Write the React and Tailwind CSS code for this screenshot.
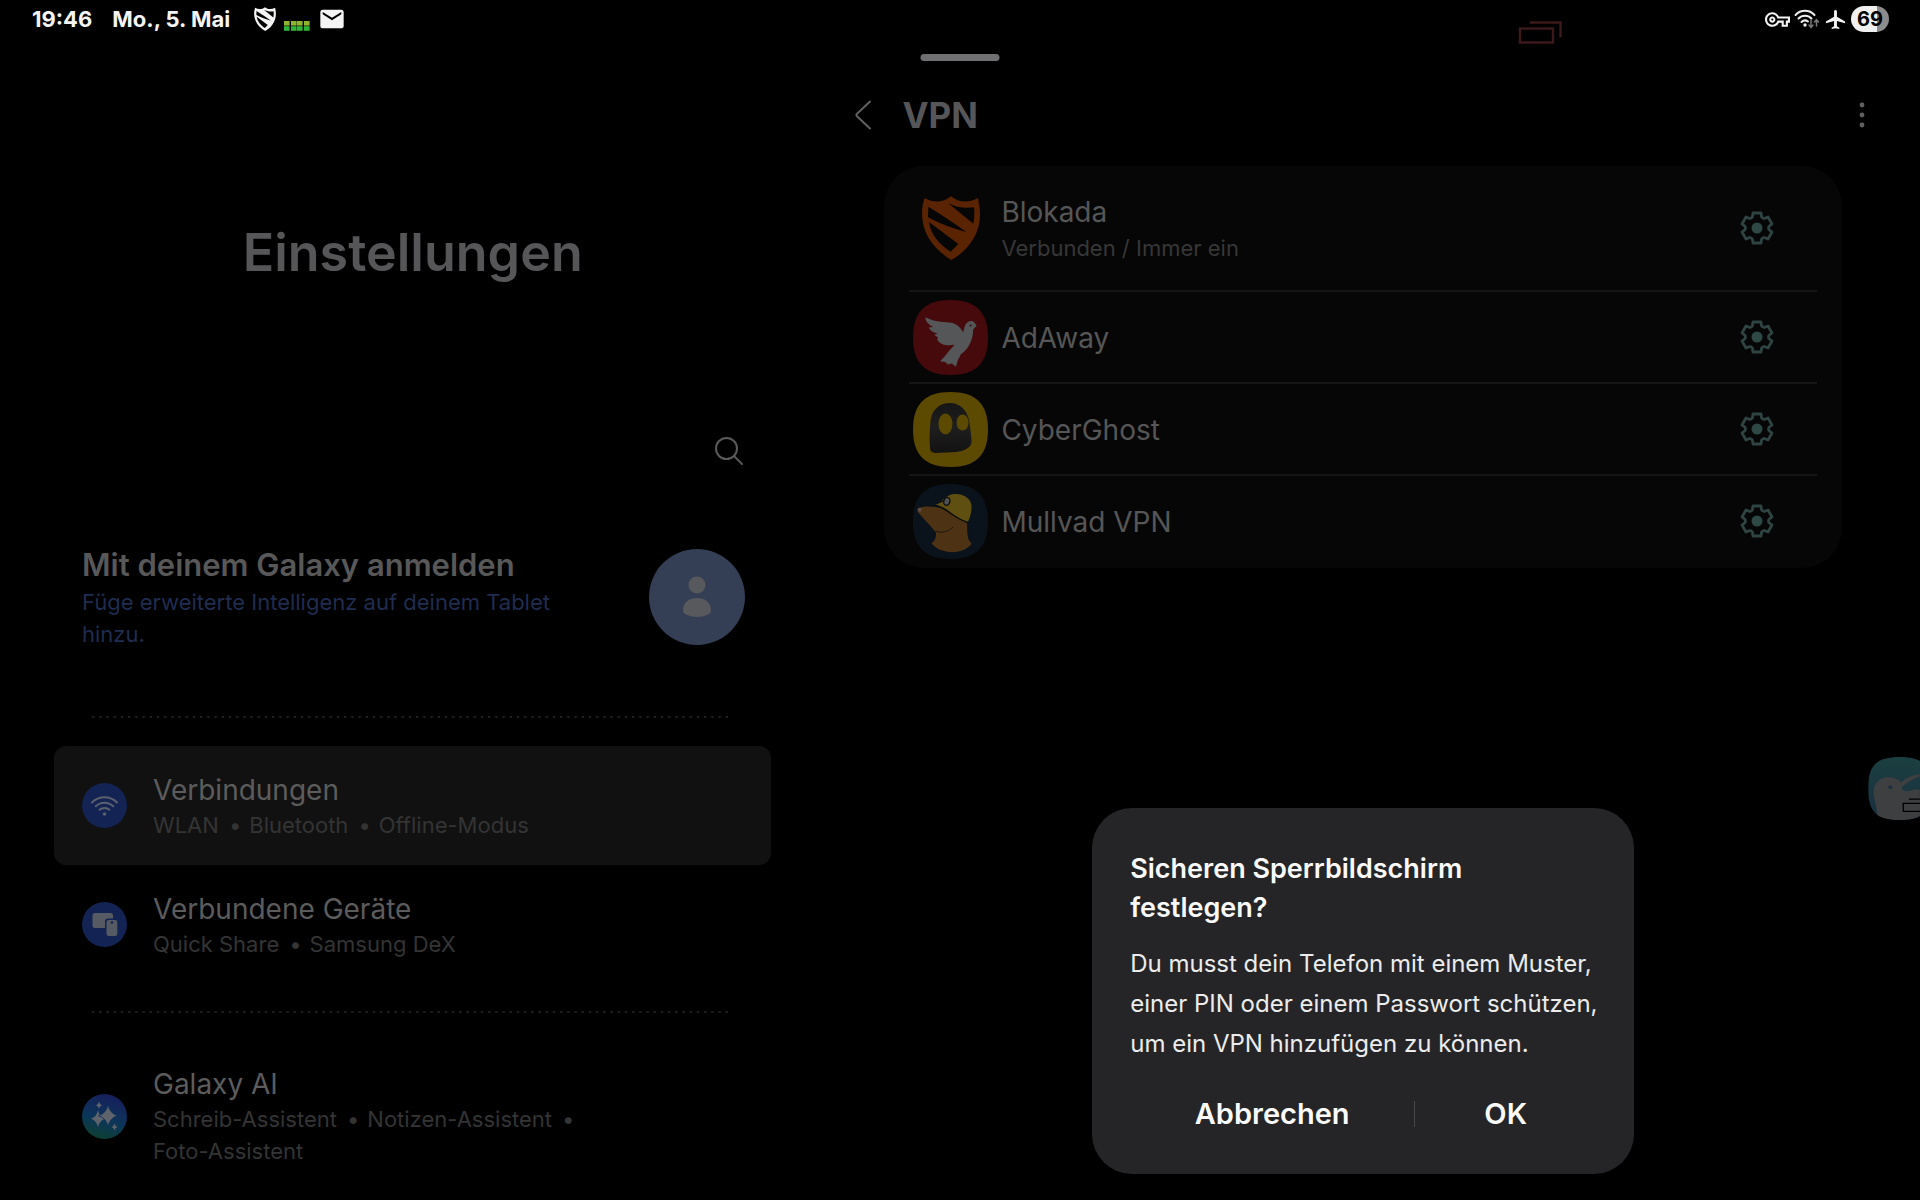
import React from 'react';
import { MdMail, MdOutlineVpnKey, MdAirplanemodeActive } from 'react-icons/md';

const SQUIRCLE = 'M0 37.5C0 12 12 0 37.5 0S75 12 75 37.5 63 75 37.5 75 0 63 0 37.5Z';

const star = (x, y, rx, ry) =>
    `M${x} ${y - ry}Q${x + rx * 0.2} ${y - ry * 0.2} ${x + rx} ${y}Q${x + rx * 0.2} ${y + ry * 0.2} ${x} ${y + ry}Q${x - rx * 0.2} ${y + ry * 0.2} ${x - rx} ${y}Q${x - rx * 0.2} ${y - ry * 0.2} ${x} ${y - ry}Z`;

// six teeth, each one is the same outline turned by 60 degrees
const gearPoints = [0, 60, 120, 180, 240, 300]
    .flatMap((deg) => {
        const a = (deg * Math.PI) / 180;
        return [[-4.6, -11], [-4, -15], [4, -15], [4.6, -11], [5.8, -10]].map(
            ([x, y]) => `${(x * Math.cos(a) - y * Math.sin(a)).toFixed(2)},${(x * Math.sin(a) + y * Math.cos(a)).toFixed(2)}`
        );
    })
    .join(' ');

function GearIcon() {
    return (
        <svg viewBox="-17 -17 34 34" className="size-[34px]" aria-hidden="true">
            <polygon points={gearPoints} fill="none" stroke="#2f4442" strokeWidth="2.8" strokeLinejoin="round" />
            <circle r="5.5" fill="#2e4845" />
        </svg>
    );
}

function ShieldIcon({ className }) {
    return (
        <svg viewBox="306 468 174 192" className={className} fill="currentColor" aria-hidden="true">
            <path
                fillRule="evenodd"
                d="M314 474C340 490 370 488 393 469C415 488 445 490 474 474C478 495 480 510 480 525C480 585 440 635 394 660C345 630 306 585 306 520C306 500 310 485 314 474ZM384 489L460 551C463 535 464 518 462 502C435 506 408 502 384 489ZM325 500L324 532C362 552 400 566 440 577C400 548 362 522 325 500ZM327 546C332 585 360 615 392 635L415 612Z"
            />
        </svg>
    );
}

function LevelIcon() {
    return (
        <svg viewBox="0 0 26 10" className="h-[10px] w-[26px]" aria-hidden="true">
            {[0, 7, 13, 20].map((x) => (
                <g key={x}>
                    <rect x={x} width="5.6" height="4.6" fill="#8db52f" />
                    <rect x={x} y="5.2" width="5.6" height="4.6" fill="#2eb437" />
                </g>
            ))}
        </svg>
    );
}

function StatusWifiIcon() {
    return (
        <svg viewBox="0 0 26 20" className="h-5 w-[26px]" fill="none" strokeWidth="2" strokeLinecap="round" aria-hidden="true">
            <path d="M1.5 6A13 13 0 0 1 20.5 6M4.5 9.5A9 9 0 0 1 17.5 9.5M7.5 13A5 5 0 0 1 14 12.5" stroke="#eee" />
            <circle cx="11" cy="16" r="1.7" fill="#eee" />
            <path d="M17 11V18M15 16L17 18.5L19 16M22.5 17V11M20.5 13L22.5 10.7L24.5 13" stroke="#777" strokeWidth="1.5" />
        </svg>
    );
}

function DoveIcon() {
    return (
        <svg viewBox="0 0 75 75" className="size-[75px]" aria-hidden="true">
            <path d={SQUIRCLE} fill="#460a0c" />
            <g transform="scale(.3348) translate(-68 -56)">
                <path
                    fill="#545657"
                    d="M104 108C112 110 120 114 132 118C150 121 165 122 182 124C200 128 210 138 218 153C221 140 224 121 240 119C250 118 253 126 258 133L248 143C247 175 236 200 211 218L202 236L196 255L184 246L172 249L164 241L149 239C162 227 172 212 192 190C172 193 150 192 140 174L143 168L131 160L142 156C125 152 118 145 115 138L128 137C115 130 106 120 104 108Z"
                />
                <circle cx="240" cy="132" r="3" fill="#2a1010" />
            </g>
        </svg>
    );
}

function GhostIcon() {
    return (
        <svg viewBox="0 0 75 75" className="size-[75px]" aria-hidden="true">
            <defs>
                <linearGradient id="ghost" x1="0" y1="0" x2="0" y2="1">
                    <stop offset="0" stopColor="#161616" />
                    <stop offset="0.5" stopColor="#1e1e1e" />
                    <stop offset="1" stopColor="#121212" />
                </linearGradient>
            </defs>
            <path d={SQUIRCLE} fill="#5c4a00" />
            <g transform="scale(.3348) translate(-68 -333)">
                <path fill="url(#ghost)" d="M119 502C116 470 118 440 121 415C127 383 150 366 178 366C210 366 231 390 236 420C240 445 242 465 243 480C243 503 213 512 185 513L134 515Q120 515 119 502Z" />
                <ellipse cx="165" cy="428" rx="21" ry="31" fill="#5c4a00" />
                <ellipse cx="216" cy="424" rx="18" ry="24" fill="#5c4a00" />
            </g>
        </svg>
    );
}

function MoleIcon() {
    return (
        <svg viewBox="0 0 75 75" className="size-[75px]" aria-hidden="true">
            <path d={SQUIRCLE} fill="#0a121b" />
            <g transform="scale(.3348) translate(-68 -609)">
                <path fill="#4d3314" d="M82 684C95 674 115 676 135 678C165 682 200 700 230 727C229 745 230 762 234 775L243 788C215 822 150 820 123 786C133 780 139 768 136 753C122 735 100 715 82 692Z" />
                <path d="M136 750C155 757 176 750 188 737" fill="none" stroke="#0a0a0a" strokeWidth="2" />
                <path fill="#5f5012" d="M133 671C150 670 152 655 175 643C200 632 240 642 243 675C243 695 238 710 232 722C210 718 195 702 170 686C155 677 145 674 133 671Z" />
                <path d="M133 673C160 674 180 705 231 724" fill="none" stroke="#0a0a0a" strokeWidth="3.5" />
                <ellipse cx="169" cy="661" rx="9" ry="12" fill="#505356" stroke="#0a0a0a" strokeWidth="4" transform="rotate(15 169 661)" />
                <path d="M146 664L158 660" stroke="#0a0a0a" strokeWidth="3" />
                <circle cx="88" cy="686" r="6" fill="#5c4c42" />
            </g>
        </svg>
    );
}

function WifiBadge() {
    return (
        <svg viewBox="0 0 45 45" className="size-[45px] shrink-0" aria-hidden="true">
            <circle cx="22.5" cy="22.5" r="22.5" fill="#132454" />
            <g fill="none" stroke="#5a606c" strokeWidth="2" strokeLinecap="round">
                <path d="M10 19.5A17.5 17.5 0 0 1 35 19.5" />
                <path d="M13.8 23.2A12.5 12.5 0 0 1 31.2 23.2" />
                <path d="M17.6 26.8A7.5 7.5 0 0 1 27.4 26.8" />
            </g>
            <circle cx="22.5" cy="31" r="1.8" fill="#5a606c" />
        </svg>
    );
}

function DevicesBadge() {
    return (
        <svg viewBox="0 0 45 45" className="size-[45px] shrink-0" aria-hidden="true">
            <circle cx="22.5" cy="22.5" r="22.5" fill="#132454" />
            <rect x="10.5" y="11" width="20.5" height="15" rx="2.5" fill="#565a63" />
            <rect x="23" y="16.5" width="13.5" height="18.5" rx="3" fill="#132454" />
            <rect x="24.5" y="18" width="10.8" height="16" rx="2.2" fill="#565a63" />
            <circle cx="30" cy="20.5" r="1.3" fill="#132454" />
        </svg>
    );
}

function GalaxyBadge() {
    return (
        <svg viewBox="0 0 45 45" className="size-[45px] shrink-0" aria-hidden="true">
            <defs>
                <linearGradient id="galaxy" x1="0.6" y1="0" x2="0.3" y2="1">
                    <stop offset="0" stopColor="#171f5c" />
                    <stop offset="0.55" stopColor="#0c355a" />
                    <stop offset="1" stopColor="#0d4030" />
                </linearGradient>
            </defs>
            <circle cx="22.5" cy="22.5" r="22.5" fill="url(#galaxy)" />
            <g fill="#5f646c">
                <path d={star(16, 24.7, 7, 8.5)} />
                <path d={star(26, 21.7, 9.5, 11)} stroke="#0d3058" strokeWidth="0.8" />
                <path d={star(17, 11.3, 3, 3.5)} />
                <path d={star(32.5, 33, 3, 3.5)} />
            </g>
        </svg>
    );
}

function StatusBar() {
    return (
        <header className="flex h-10 items-start justify-between pr-[31px] pl-8 text-[22px] font-bold text-[#f4f4f4]">
            <div className="flex h-[38px] items-center gap-5">
                <span>19:46</span>
                <span>Mo., 5. Mai</span>
                <div className="flex items-center gap-2 pl-1">
                    <ShieldIcon className="h-6 w-[22px]" />
                    <span className="flex h-6 items-end">
                        <LevelIcon />
                    </span>
                    <MdMail className="size-7" />
                </div>
            </div>
            <div className="flex h-[38px] items-center gap-1">
                <MdOutlineVpnKey className="size-[25px]" />
                <StatusWifiIcon />
                <MdAirplanemodeActive className="size-[23px]" />
                <span className="flex h-[26px] w-[38px] items-center justify-center rounded-full bg-linear-to-r from-[#f0f0f0] from-69% to-[#8c8c8c] to-69% text-xl text-black">
                    69
                </span>
            </div>
        </header>
    );
}

function DottedLine() {
    return (
        <svg className="mx-[38px] h-[3px] flex-1" aria-hidden="true">
            <line x1="0" y1="2" x2="100%" y2="2" stroke="#1e1e1e" strokeWidth="2" strokeDasharray="2.4 4.8" />
        </svg>
    );
}

function MenuItem({ icon, title, items, active }) {
    return (
        <a href="#" className={`flex min-h-[119px] items-center gap-[26px] rounded-xl py-6 pr-12 pl-7 ${active ? 'bg-[#111111]' : ''}`}>
            {icon}
            <span className="block">
                <span className="block text-[28px] leading-[38px] text-[#5c5c5c]">{title}</span>
                <span className="flex flex-wrap gap-x-2 text-[22px] leading-8 text-[#343434]">
                    {items.map((item, i) => (
                        <span key={item} className="whitespace-nowrap">
                            {item}
                            {i < items.length - 1 && <span className="ml-2.5">•</span>}
                        </span>
                    ))}
                </span>
            </span>
        </a>
    );
}

const vpns = [
    { name: 'Blokada', status: 'Verbunden / Immer ein', icon: <ShieldIcon className="h-16 w-[58px] text-[#5a2403]" /> },
    { name: 'AdAway', icon: <DoveIcon /> },
    { name: 'CyberGhost', icon: <GhostIcon /> },
    { name: 'Mullvad VPN', icon: <MoleIcon /> },
];

function VpnRow({ name, status, icon }) {
    return (
        <li className={`flex items-center border-b-2 border-[#151515] pr-[43px] pl-1 last:border-transparent ${status ? 'h-[126px]' : 'h-[92px]'}`}>
            <div className="flex w-[75px] justify-center">{icon}</div>
            <div className="ml-[13px] flex-1 pt-px">
                <h2 className="text-[28px] leading-[38px] text-[#565656]">{name}</h2>
                {status && <p className="text-[22px] leading-[34px] text-[#373737]">{status}</p>}
            </div>
            <button type="button" aria-label={`${name} Einstellungen`}>
                <GearIcon />
            </button>
        </li>
    );
}

function LockDialog() {
    return (
        <div role="dialog" aria-labelledby="dialog-title" className="absolute bottom-[26px] left-1/2 w-[542px] -translate-x-1/2 rounded-[40px] bg-[#252527] px-[38px] pt-[41px] pb-8">
            <h2 id="dialog-title" className="text-[27px] leading-[39px] font-semibold text-[#fafafa]">
                Sicheren Sperrbildschirm festlegen?
            </h2>
            <p className="mt-[17px] -mr-4 text-[24px] leading-10 text-[#ececec]">
                Du musst dein Telefon mit einem Muster, einer PIN oder einem Passwort schützen, um ein VPN hinzufügen zu können.
            </p>
            <div className="mt-[22px] flex h-14 items-center text-[29px] font-semibold text-[#fafafa]">
                <button type="button" className="flex-1">Abbrechen</button>
                <span className="h-[26px] w-px bg-[#48484a]" />
                <button type="button" className="w-[181px]">OK</button>
            </div>
        </div>
    );
}

function RecentsIcon() {
    return (
        <svg viewBox="0 0 44 24" className="absolute top-5 right-[358px] h-6 w-11" fill="none" stroke="#3c191b" strokeWidth="2.4" aria-hidden="true">
            <rect x="2" y="8.5" width="33" height="14" />
            <path d="M12 2.5H42.5V17.5" />
        </svg>
    );
}

function FloatingBubble() {
    return (
        <button type="button" aria-label="Schwebendes Fenster" className="absolute top-[757px] right-0 h-[63px] w-[52px]">
            <svg viewBox="145 80 156 190" className="h-full w-full">
                <defs>
                    <linearGradient id="sky" x1="0" y1="0" x2="0" y2="1">
                        <stop offset="0" stopColor="#1b3f40" />
                        <stop offset="1" stopColor="#182f40" />
                    </linearGradient>
                    <clipPath id="bubble">
                        <path d="M145 175C145 105 170 80 240 80S335 105 335 175 310 270 240 270 145 245 145 175Z" />
                    </clipPath>
                </defs>
                <g clipPath="url(#bubble)">
                    <rect x="145" y="80" width="190" height="190" fill="url(#sky)" />
                    <path fill="#3e3f40" d="M170 262C176 235 160 210 162 180C164 155 185 140 205 141C225 141 236 148 243 156C262 142 282 133 301 132V139C280 146 258 160 246 172C250 184 262 186 275 180C285 177 294 178 301 180V270H172Z" />
                    <circle cx="212" cy="171" r="6" fill="#1c3040" />
                    <path d="M268 207H301M301 220H251V244H301" fill="none" stroke="#000" strokeWidth="4" />
                </g>
            </svg>
        </button>
    );
}

export default function App() {
    return (
        <div className="relative flex min-h-screen flex-col overflow-hidden bg-black font-['Inter',sans-serif]">
            <StatusBar />
            <div className="absolute top-[54px] left-1/2 h-[7px] w-[79px] -translate-x-1/2 rounded-full bg-[#707072]" />
            <RecentsIcon />

            <main className="flex flex-1">
                <nav className="w-[42%] pr-[35px] pl-[54px]">
                    <h1 className="pt-[183px] text-center text-[52px] leading-[60px] font-semibold text-[#565658]">Einstellungen</h1>
                    <div className="mt-[154px] flex justify-end pr-7">
                        <button type="button" aria-label="Suchen">
                            <svg viewBox="0 0 28 28" className="size-7" fill="none" stroke="#5a5a5a" strokeWidth="2" strokeLinecap="round">
                                <circle cx="11.5" cy="11.5" r="10.5" />
                                <path d="M19 19L27 27" />
                            </svg>
                        </button>
                    </div>
                    <a href="#" className="mt-[78px] flex items-center justify-between pr-[26px] pl-7">
                        <span className="block max-w-[500px] pt-px">
                            <span className="block text-[31px] leading-[42px] font-semibold text-[#585858]">Mit deinem Galaxy anmelden</span>
                            <span className="block text-[22px] leading-8 text-[#202c50]">Füge erweiterte Intelligenz auf deinem Tablet hinzu.</span>
                        </span>
                        <svg viewBox="0 0 96 96" className="size-24 shrink-0" aria-hidden="true">
                            <circle cx="48" cy="48" r="48" fill="#343f55" />
                            <circle cx="48" cy="36" r="8.5" fill="#58595c" />
                            <path d="M34 62C34 53 40 49 48 49S62 53 62 62Q62 64 60 65C53 69 43 69 36 65Q34 64 34 62Z" fill="#58595c" />
                        </svg>
                    </a>
                    <div className="flex pt-[65px] pb-7">
                        <DottedLine />
                    </div>
                    <MenuItem active icon={<WifiBadge />} title="Verbindungen" items={['WLAN', 'Bluetooth', 'Offline-Modus']} />
                    <MenuItem icon={<DevicesBadge />} title="Verbundene Geräte" items={['Quick Share', 'Samsung DeX']} />
                    <div className="flex pt-[26px] pb-7">
                        <DottedLine />
                    </div>
                    <MenuItem icon={<GalaxyBadge />} title="Galaxy AI" items={['Schreib-Assistent', 'Notizen-Assistent', 'Foto-Assistent']} />
                </nav>

                <section className="relative flex-1">
                    <div className="mt-[45px] flex h-[60px] items-center pr-[53px] pl-12">
                        <button type="button" aria-label="Zurück">
                            <svg viewBox="0 0 18 30" className="h-[30px] w-[18px]" fill="none" stroke="#606060" strokeWidth="2" strokeLinecap="round" strokeLinejoin="round">
                                <path d="M16 1.5L3 13.8Q1.8 15 3 16.2L16 28.5" />
                            </svg>
                        </button>
                        <h1 className="ml-[30px] flex-1 text-[35px] font-bold text-[#565658]">VPN</h1>
                        <button type="button" aria-label="Weitere Optionen">
                            <svg viewBox="0 0 10 26" className="h-[26px] w-[10px]" fill="#606060">
                                <circle cx="5" cy="3" r="2.4" />
                                <circle cx="5" cy="13" r="2.4" />
                                <circle cx="5" cy="23" r="2.4" />
                            </svg>
                        </button>
                    </div>
                    <ul className="mx-[78px] mt-[21px] rounded-[40px] bg-[#060606] px-[25px]">
                        {vpns.map((vpn) => (
                            <VpnRow key={vpn.name} {...vpn} />
                        ))}
                    </ul>
                    <LockDialog />
                </section>
            </main>

            <FloatingBubble />
        </div>
    );
}
